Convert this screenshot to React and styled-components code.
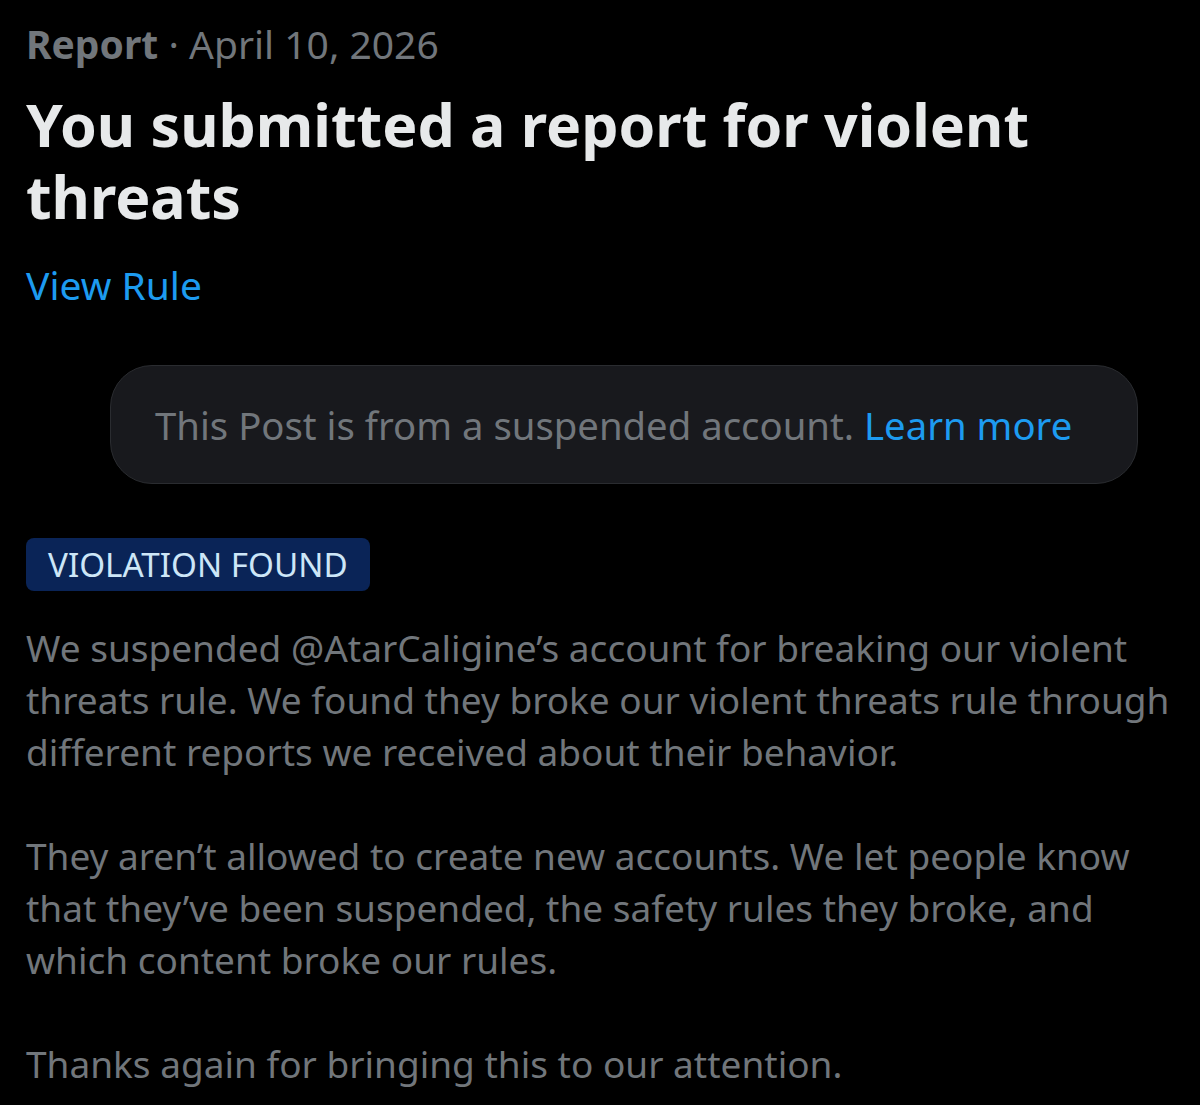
import styled, { createGlobalStyle } from "styled-components";

const GlobalStyle = createGlobalStyle`
  html, body {
    margin: 0;
    padding: 0;
    background: #000;
  }
  body {
    font-family: "Noto Sans", "Open Sans", Arial, sans-serif;
  }
`;

export default function App() {
  return (
    <>
      <GlobalStyle />
      <Page>
        <Meta>
          <strong>Report</strong> · April 10, 2026
        </Meta>
        <Title>You submitted a report for violent threats</Title>
        <BlueLink href="#">View Rule</BlueLink>
        <NoticeRow>
          <Notice>
            This Post is from a suspended account. <BlueLink href="#">Learn more</BlueLink>
          </Notice>
        </NoticeRow>
        <Badge>VIOLATION FOUND</Badge>
        <Body>
          <p>
            We suspended @AtarCaligine’s account for breaking our violent
            threats rule. We found they broke our violent threats rule through
            different reports we received about their behavior.
          </p>
          <p>
            They aren’t allowed to create new accounts. We let people know that
            they’ve been suspended, the safety rules they broke, and which
            content broke our rules.
          </p>
          <p>Thanks again for bringing this to our attention.</p>
        </Body>
      </Page>
    </>
  );
}

const Page = styled.main`
  padding: 18px 12px 0 26px;
  display: flex;
  flex-direction: column;
  align-items: flex-start;
  color: #e7e9ea;
`;

const Meta = styled.div`
  font-size: 39px;
  line-height: 52px;
  color: #71767b;
  strong {
    font-weight: 700;
  }
`;

const Title = styled.h1`
  margin: 18px 0 0;
  font-size: 59px;
  line-height: 72px;
  font-weight: 700;
  color: #e7e9ea;
  max-width: 1100px;
`;

const BlueLink = styled.a`
  color: #1d9bf0;
  text-decoration: none;
  font-size: 39px;
  line-height: 52px;
  margin-top: 27px;
`;

const NoticeRow = styled.div`
  align-self: stretch;
  display: flex;
  padding: 0 50px 0 84px;
  margin-top: 54px;
`;

const Notice = styled.div`
  flex: 1;
  height: 119px;
  box-sizing: border-box;
  display: flex;
  align-items: center;
  padding: 0 44px;
  background: #18191d;
  border: 1px solid #2a2c30;
  border-radius: 42px;
  font-size: 38.3px;
  color: #71767b;
  white-space: pre;
  a {
    margin: 0;
    font-size: inherit;
  }
`;

const Badge = styled.div`
  margin-top: 54px;
  padding: 0 22px;
  height: 53px;
  display: flex;
  align-items: center;
  background: #0a2457;
  color: #cde6f7;
  border-radius: 8px;
  font-size: 33.2px;
`;

const Body = styled.div`
  margin-top: 31px;
  font-size: 37px;
  line-height: 52px;
  color: #71767b;
  p {
    margin: 0 0 52px;
  }
`;
